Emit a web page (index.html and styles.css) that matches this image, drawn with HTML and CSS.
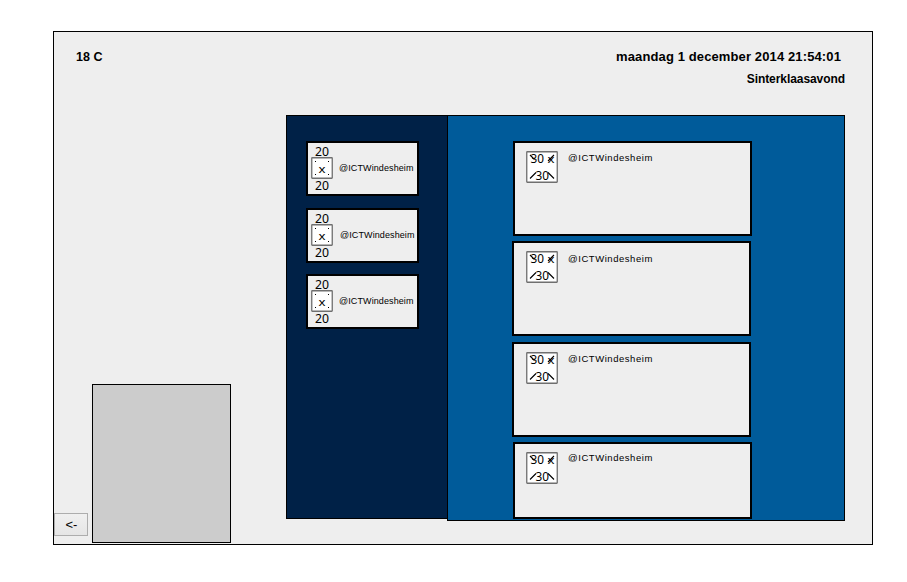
FILE: index.html
```html
<!DOCTYPE html>
<html lang="nl">
<head>
<meta charset="utf-8">
<title>Dashboard</title>
<link rel="stylesheet" href="styles.css">
</head>
<body>
<svg class="defs" width="0" height="0" aria-hidden="true">
  <symbol id="avatar-small" viewBox="0 0 22 48" overflow="visible">
    <rect x="0.75" y="13.75" width="20.5" height="20.5" rx=".5" fill="#fff" stroke="#6f6f6f" stroke-width="1.3"/>
    <path d="M4 17h1v1h-1zM17 17h1v1h-1zM4 30h1v1h-1zM17 30h1v1h-1z" fill="#000"/>
    <text x="4" y="12" font-size="13" textLength="14" lengthAdjust="spacingAndGlyphs">20</text>
    <text x="7.6" y="29" font-size="11.5" textLength="7" lengthAdjust="spacingAndGlyphs">x</text>
    <text x="4" y="46" font-size="13" textLength="14" lengthAdjust="spacingAndGlyphs">20</text>
  </symbol>
  <symbol id="avatar-large" viewBox="0 0 32 32" overflow="visible">
    <rect x="0.75" y="0.75" width="30.5" height="30.5" rx=".5" fill="#fff" stroke="#6f6f6f" stroke-width="1.3"/>
    <path d="M4 4l4.5 4.5M28 4l-6 6M4 27.5l6-6M22 21.5l6 6" fill="none" stroke="#000" stroke-width="1.1"/>
    <text x="4.5" y="12" font-size="12.5" textLength="13.5" lengthAdjust="spacingAndGlyphs">30</text>
    <text x="21.5" y="11.5" font-size="11.5" textLength="7" lengthAdjust="spacingAndGlyphs">x</text>
    <text x="9.5" y="29" font-size="12.5" textLength="13.5" lengthAdjust="spacingAndGlyphs">30</text>
  </symbol>
</svg>
<main class="frame">
  <header class="header">
    <div class="temperature">18 C</div>
    <div class="heading">
      <div class="date">maandag 1 december 2014 21:54:01</div>
      <div class="event">Sinterklaasavond</div>
    </div>
  </header>
  <div class="content">
    <aside class="side">
      <button class="back" type="button">&lt;-</button>
      <div class="placeholder"></div>
    </aside>
    <section class="mentions">
      <article class="mention"><svg class="pic"><use href="#avatar-small"/></svg><span class="name">@ICTWindesheim</span></article>
      <article class="mention mention-mid"><svg class="pic"><use href="#avatar-small"/></svg><span class="name">@ICTWindesheim</span></article>
      <article class="mention"><svg class="pic"><use href="#avatar-small"/></svg><span class="name">@ICTWindesheim</span></article>
    </section>
    <section class="tweets">
      <article class="tweet shifted"><svg class="photo"><use href="#avatar-large"/></svg><span class="author">@ICTWindesheim</span></article>
      <article class="tweet lower"><svg class="photo"><use href="#avatar-large"/></svg><span class="author">@ICTWindesheim</span></article>
      <article class="tweet third"><svg class="photo"><use href="#avatar-large"/></svg><span class="author">@ICTWindesheim</span></article>
      <article class="tweet shifted last"><svg class="photo"><use href="#avatar-large"/></svg><span class="author">@ICTWindesheim</span></article>
    </section>
  </div>
</main>
</body>
</html>
```

FILE: styles.css
```css
* { box-sizing: border-box; }

body {
  margin: 0;
  height: 582px;
  overflow: hidden;
  background: #fff;
  color: #000;
  font-family: "Liberation Sans", sans-serif;
}

.defs { display: block; }

.frame {
  width: 820px;
  height: 514px;
  margin: 31px 0 0 53px;
  border: 1px solid #000;
  background: #eee;
}

.header {
  display: flex;
  justify-content: space-between;
  height: 83px;
  padding: 17px 27px 0 22px;
  font-weight: bold;
  white-space: nowrap;
}

.temperature { font-size: 12.5px; line-height: 16px; }
.heading { text-align: right; }

.date {
  padding-right: 4px;
  font-size: 13px;
  line-height: 16px;
  letter-spacing: 0.12px;
}

.event {
  margin-top: 6px;
  font-size: 12px;
  line-height: 16px;
  letter-spacing: -0.07px;
}

.content {
  display: flex;
  align-items: flex-start;
}

.side {
  display: flex;
  align-items: flex-start;
  width: 232px;
  padding-top: 269px;
}

.back {
  width: 34px;
  height: 23px;
  margin-top: 129px;
  padding: 0 0 0 1px;
  border: 1px solid #adadad;
  background: linear-gradient(#f0f0f0, #e5e5e5);
  color: #000;
  font: 13px/21px "Liberation Sans", sans-serif;
}

.placeholder {
  width: 139px;
  height: 159px;
  margin-left: 4px;
  border: 1px solid #000;
  background: #ccc;
}

.mentions {
  display: flex;
  flex-direction: column;
  width: 161px;
  height: 404px;
  padding: 25px 0 0 19px;
  border: 1px solid #000;
  border-right: 0;
  background: #002147;
}

.mention {
  display: flex;
  width: 113px;
  height: 55px;
  padding: 1px 0 0 3px;
  border: 2px solid #000;
  background: #eee;
}

.mention-mid { margin: 12px 0 11px; }
.pic { flex: none; width: 22px; height: 48px; overflow: visible; }

.name {
  margin: 18px 0 0 6px;
  font-size: 9px;
  line-height: 12px;
  letter-spacing: 0.1px;
  white-space: nowrap;
}

.mention-mid .name { margin-left: 7px; }

.tweets {
  display: flex;
  flex-direction: column;
  gap: 5px;
  width: 398px;
  height: 406px;
  padding: 25px 0 0 64px;
  border: 1px solid #000;
  background: #005b9a;
}

.tweet {
  display: flex;
  gap: 10px;
  width: 239px;
  height: 95px;
  padding: 8px 0 0 12px;
  border: 2px solid #000;
  background: #eee;
}

.shifted { margin-left: 1px; padding-left: 11px; }
.third { margin-top: 1px; }
.last { height: 77px; }
.photo { flex: none; width: 32px; height: 32px; overflow: visible; }

.author {
  font-size: 9.5px;
  line-height: 13px;
  letter-spacing: 0.55px;
  white-space: nowrap;
}

.lower .author { margin-top: 1px; }
.last .author { margin-top: -1px; }

svg text { font-family: "Noto Sans", sans-serif; fill: #000; }
```
